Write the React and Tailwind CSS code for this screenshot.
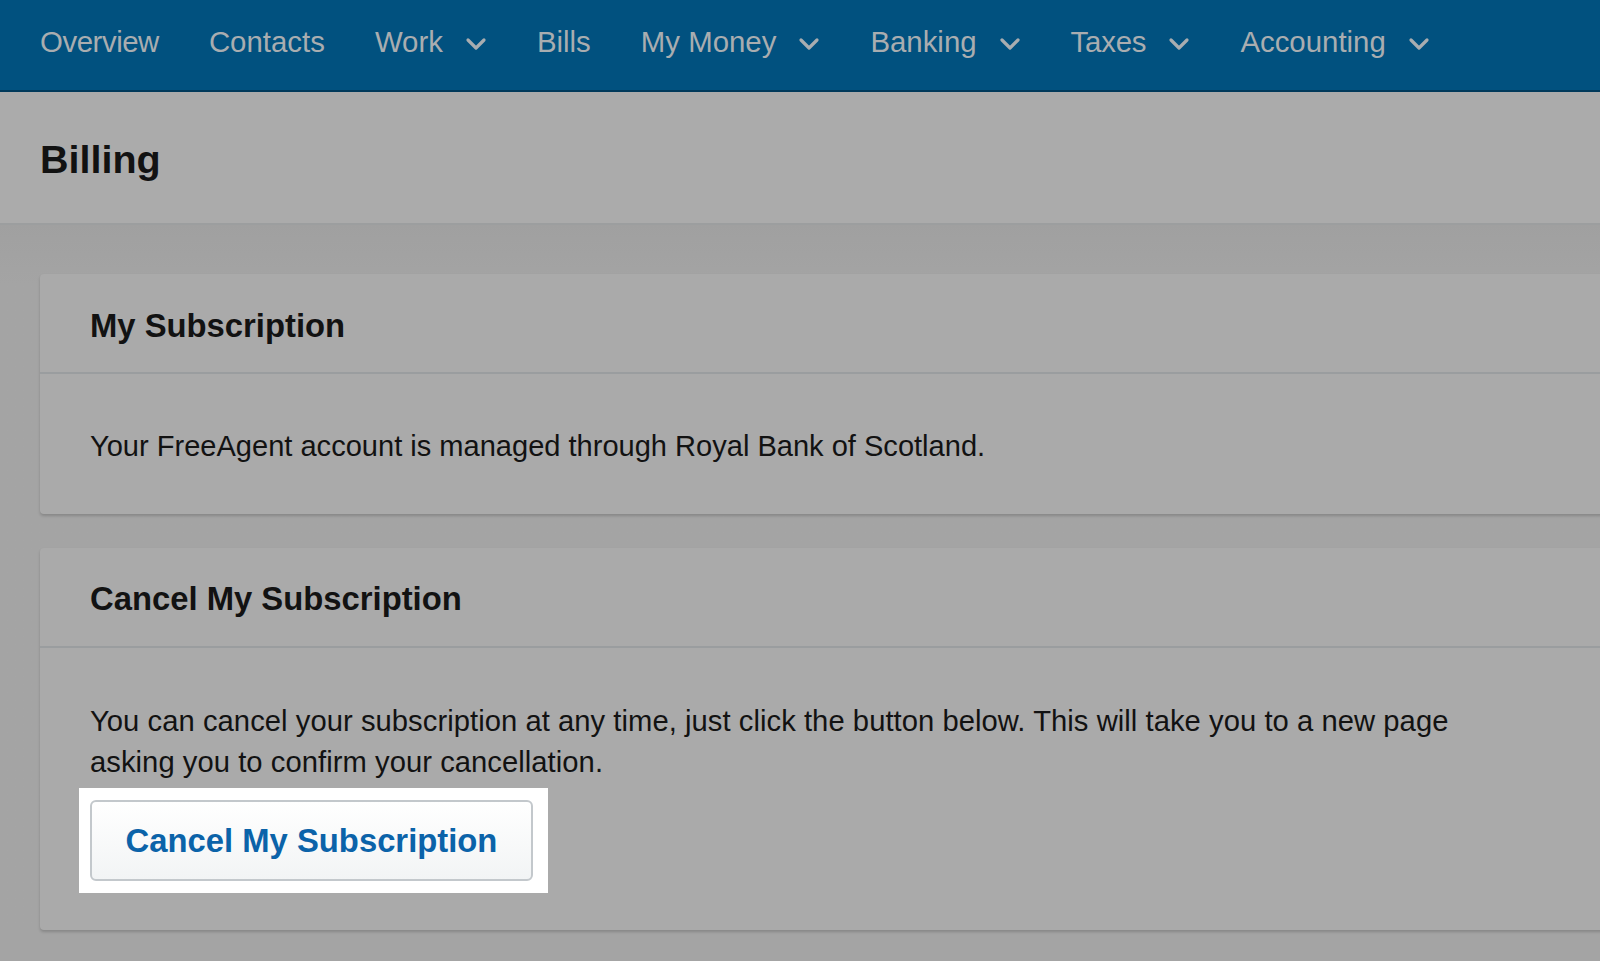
import React from "react";

function Chevron() {
  return (
    <svg width="22" height="14" viewBox="0 0 22 14" className="ml-[22px] mt-[4px]">
      <polyline points="3,3 11,11 19,3" fill="none" stroke="#a9adb0" strokeWidth="3.2" strokeLinecap="round" strokeLinejoin="round" />
    </svg>
  );
}

function NavItem({ label, dd, cls = "" }) {
  return (
    <div className="flex items-center">
      <span className={cls}>{label}</span>
      {dd && <Chevron />}
    </div>
  );
}

export default function App() {
  return (
    <div className="w-[1600px] h-[961px] overflow-hidden bg-[#a4a4a4] font-['Liberation_Sans',Arial,Helvetica,sans-serif] text-[#111]">
      <nav className="h-[92px] bg-[#01517f] border-b-2 border-[#013a5b] flex items-center pl-[40px] pb-[5px] gap-[50px] text-[29.4px] text-[#a9adb0]">
        <NavItem label="Overview" cls="tracking-[-0.45px]" />
        <NavItem label="Contacts" />
        <NavItem label="Work" dd />
        <NavItem label="Bills" />
        <NavItem label="My Money" dd />
        <NavItem label="Banking" dd />
        <NavItem label="Taxes" dd cls="tracking-[-0.2px]" />
        <NavItem label="Accounting" dd />
      </nav>
      <header className="h-[133px] bg-[#ababab] border-b-2 border-[#9c9e9f] flex items-center px-[40px] pt-[5px]">
        <h1 className="text-[39.5px] font-bold text-[#121212] leading-none">Billing</h1>
      </header>
      <main className="pl-[40px] pt-[49px] bg-gradient-to-b from-[#a0a0a0] to-[#a4a4a4] to-[60px] flex flex-col gap-[34px]">
        <section className="w-[1600px] bg-[#aaaaaa] rounded-[4px] shadow-[0_2px_3px_rgba(0,0,0,0.18)]">
          <div className="h-[100px] flex items-center px-[50px] pt-[6px] border-b-2 border-[#9a9d9f]">
            <h2 className="text-[32.8px] font-bold leading-none text-[#121212]">My Subscription</h2>
          </div>
          <div className="h-[140px] flex items-center px-[50px] pt-[4px]">
            <p className="text-[29.05px] leading-[41px] text-[#121212]">Your FreeAgent account is managed through Royal Bank of Scotland.</p>
          </div>
        </section>
        <section className="w-[1600px] bg-[#aaaaaa] rounded-[4px] shadow-[0_2px_3px_rgba(0,0,0,0.18)]">
          <div className="h-[100px] flex items-center px-[50px] pt-[5px] border-b-2 border-[#9a9d9f]">
            <h2 className="text-[32.8px] font-bold leading-none text-[#121212]">Cancel My Subscription</h2>
          </div>
          <div className="px-[50px] pt-[53px] pb-[37px]">
            <p className="w-[1420px] text-[29.2px] leading-[41px] tracking-[0.05px] text-[#121212]">
              You can cancel your subscription at any time, just click the button below. This will take you to a new page asking you to confirm your cancellation.
            </p>
            <div className="mt-[5px] -ml-[11px] w-[469px] bg-white p-[12px] pl-[11px]">
              <button className="w-[443px] h-[81px] rounded-[6px] border-2 border-[#c3c8cc] bg-gradient-to-b from-white to-[#f2f4f5] text-[32.8px] font-bold text-[#0b63a9] flex items-center justify-center">
                Cancel My Subscription
              </button>
            </div>
          </div>
        </section>
      </main>
    </div>
  );
}
